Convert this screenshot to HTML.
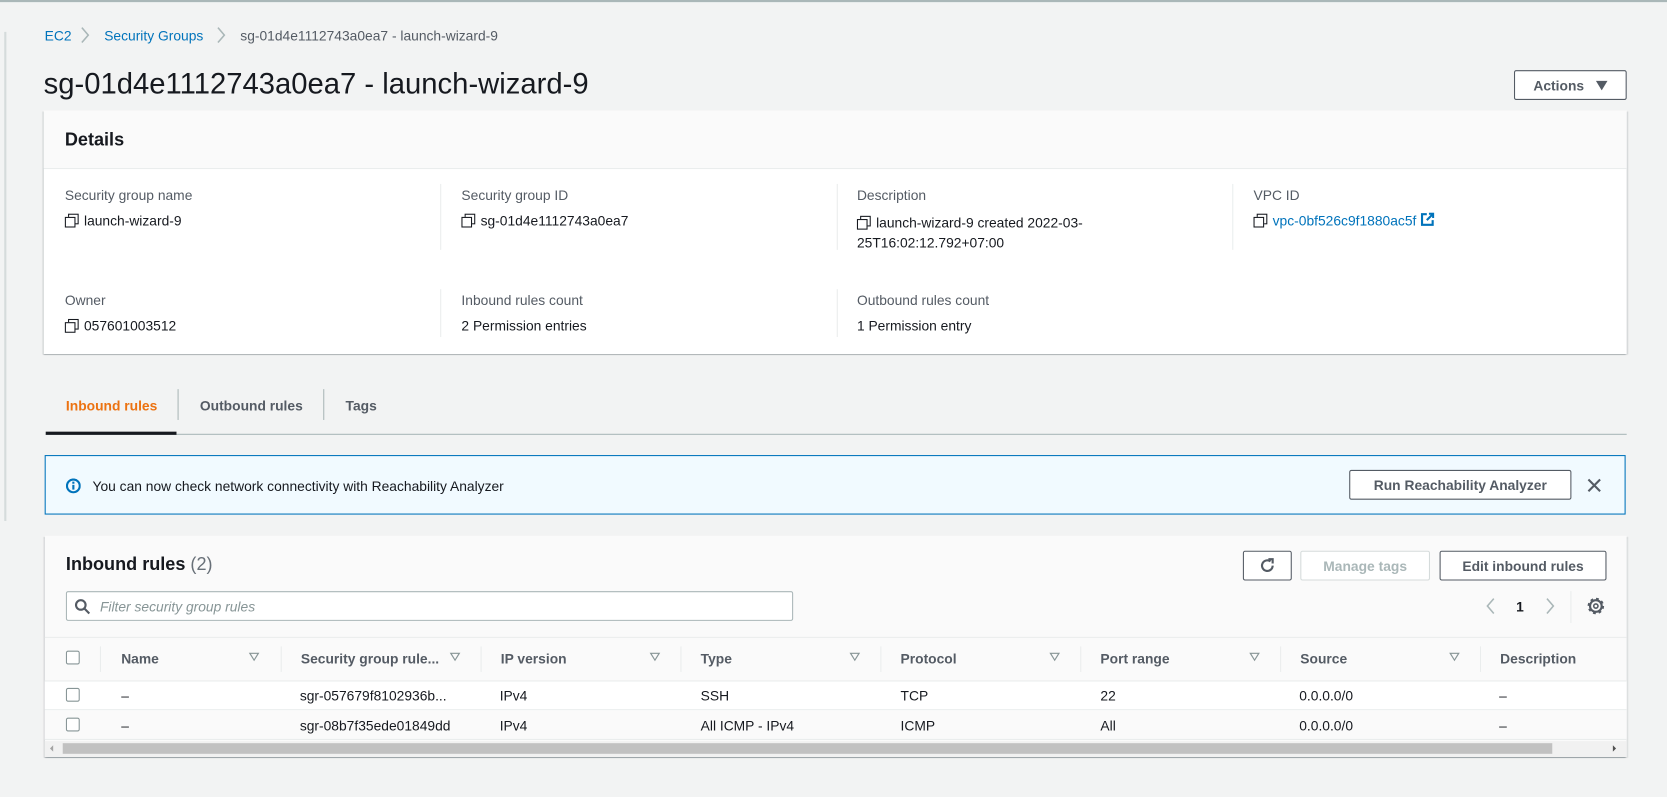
<!DOCTYPE html>
<html><head><meta charset="utf-8"><style>
*{box-sizing:border-box;margin:0;padding:0}
html,body{width:1667px;height:797px;overflow:hidden;background:#f2f3f3}
#w{position:absolute;left:0;top:0;width:1568px;height:750px;transform:scale(1.0632);transform-origin:0 0;font-family:"Liberation Sans",sans-serif;font-size:13px;color:#16191f}
.a{position:absolute;white-space:nowrap}
.l{color:#0073bb}
.g{color:#545b64}
.btn{position:absolute;border:1px solid #545b64;border-radius:2px;background:#fff;font-weight:bold;color:#545b64;font-size:13px;display:flex;align-items:center;justify-content:center}
.sep{position:absolute;width:1px;background:#eaeded}
.cp{display:inline-block;width:12px;height:12px;position:relative;vertical-align:-1px;margin-right:6px}
.cp:before{content:"";position:absolute;left:3px;top:0;width:8px;height:8px;border:1.5px solid #16191f}
.cp:after{content:"";position:absolute;left:0;top:3px;width:8px;height:8px;border:1.5px solid #16191f;background:#fff}
.cb{position:absolute;width:13px;height:13px;border:1px solid #879596;border-radius:2px;background:#fff}
.th{position:absolute;font-weight:bold;color:#545b64;top:612px}
.tri{position:absolute;top:614px;width:0;height:0;border-left:5px solid transparent;border-right:5px solid transparent;border-top:8px solid #879596}
.tri:after{content:"";position:absolute;left:-3px;top:-7px;border-left:3px solid transparent;border-right:3px solid transparent;border-top:5px solid #fafafa}
.td{position:absolute}
</style></head><body><div id="w">
<div class="a" style="left:0;top:0;width:1568px;height:2px;background:#aab7b8"></div>
<div class="a" style="left:4px;top:30px;width:2px;height:460px;background:#d5dbdb"></div>

<div class="a l" style="left:42px;top:26px">EC2</div>
<svg class="a" style="left:75px;top:25px" width="10" height="16"><path d="M2 1l6 7-6 7" fill="none" stroke="#aab7b8" stroke-width="1.5"/></svg>
<div class="a l" style="left:98px;top:26px">Security Groups</div>
<svg class="a" style="left:203px;top:25px" width="10" height="16"><path d="M2 1l6 7-6 7" fill="none" stroke="#aab7b8" stroke-width="1.5"/></svg>
<div class="a g" style="left:226px;top:26px">sg-01d4e1112743a0ea7 - launch-wizard-9</div>

<div class="a" style="left:41px;top:63px;font-size:27.5px">sg-01d4e1112743a0ea7 - launch-wizard-9</div>
<div class="btn" style="left:1424px;top:66px;width:106px;height:28px">Actions&nbsp;&nbsp;&nbsp;<svg width="11" height="9"><path d="M0 0h11L5.5 9z" fill="#545b64"/></svg></div>

<div class="a" style="left:41px;top:104px;width:1489px;height:229px;background:#fff;box-shadow:0 1px 1px rgba(0,28,36,.3),1px 1px 1px rgba(0,28,36,.15),-1px 1px 1px rgba(0,28,36,.15)">
 <div style="height:55px;background:#fafafa;border-bottom:1px solid #eaeded;padding:18px 20px;font-size:17px;font-weight:bold">Details</div>
</div>
<div class="sep" style="left:414px;top:173px;height:62px"></div>
<div class="sep" style="left:787px;top:173px;height:62px"></div>
<div class="sep" style="left:1159px;top:173px;height:62px"></div>
<div class="sep" style="left:414px;top:272px;height:45px"></div>
<div class="sep" style="left:787px;top:272px;height:45px"></div>
<div class="a g" style="left:61px;top:176px">Security group name</div>
<div class="a" style="left:61px;top:200px"><span class="cp"></span>launch-wizard-9</div>
<div class="a g" style="left:434px;top:176px">Security group ID</div>
<div class="a" style="left:434px;top:200px"><span class="cp"></span>sg-01d4e1112743a0ea7</div>
<div class="a g" style="left:806px;top:176px">Description</div>
<div class="a" style="left:806px;top:200px;line-height:19px"><span class="cp"></span>launch-wizard-9 created 2022-03-<br>25T16:02:12.792+07:00</div>
<div class="a g" style="left:1179px;top:176px">VPC ID</div>
<div class="a l" style="left:1179px;top:200px"><span class="cp"></span>vpc-0bf526c9f1880ac5f <svg width="13" height="13" viewBox="0 0 13 13" style="vertical-align:-1px"><path d="M6 1.5H1.5v10h10V7" fill="none" stroke="#0073bb" stroke-width="2"/><path d="M8 1h4v4M12 1L6 7" fill="none" stroke="#0073bb" stroke-width="2"/></svg></div>
<div class="a g" style="left:61px;top:275px">Owner</div>
<div class="a" style="left:61px;top:299px"><span class="cp"></span>057601003512</div>
<div class="a g" style="left:434px;top:275px">Inbound rules count</div>
<div class="a" style="left:434px;top:299px">2 Permission entries</div>
<div class="a g" style="left:806px;top:275px">Outbound rules count</div>
<div class="a" style="left:806px;top:299px">1 Permission entry</div>

<div class="a" style="left:43px;top:408px;width:1487px;height:1px;background:#aab7b8"></div>
<div class="a" style="left:43px;top:406px;width:123px;height:3px;background:#16191f"></div>
<div class="a" style="left:167px;top:366px;width:1px;height:29px;background:#aab7b8"></div>
<div class="a" style="left:304px;top:366px;width:1px;height:29px;background:#aab7b8"></div>
<div class="a" style="left:62px;top:374px;font-weight:bold;color:#ec7211">Inbound rules</div>
<div class="a g" style="left:188px;top:374px;font-weight:bold">Outbound rules</div>
<div class="a g" style="left:325px;top:374px;font-weight:bold">Tags</div>

<div class="a" style="left:42px;top:428px;width:1487px;height:56px;background:#f1faff;border:1px solid #0073bb"></div>
<svg class="a" style="left:62px;top:450px" width="14" height="14" viewBox="0 0 14 14"><circle cx="7" cy="7" r="6" fill="none" stroke="#0073bb" stroke-width="2"/><rect x="6" y="6" width="2" height="4.5" fill="#0073bb"/><rect x="6" y="3" width="2" height="2" fill="#0073bb"/></svg>
<div class="a" style="left:87px;top:450px">You can now check network connectivity with Reachability Analyzer</div>
<div class="btn" style="left:1269px;top:442px;width:209px;height:28px;color:#545b64">Run Reachability Analyzer</div>
<svg class="a" style="left:1493px;top:450px" width="13" height="13"><path d="M1 1L12 12M12 1L1 12" stroke="#545b64" stroke-width="2"/></svg>

<div class="a" style="left:42px;top:504px;width:1488px;height:208px;background:#fafafa;box-shadow:0 1px 1px rgba(0,28,36,.3),1px 1px 1px rgba(0,28,36,.15),-1px 1px 1px rgba(0,28,36,.15)"></div>
<div class="a" style="left:62px;top:521px;font-size:17px;font-weight:bold">Inbound rules <span style="font-weight:normal;color:#687078">(2)</span></div>
<div class="btn" style="left:1169px;top:518px;width:46px;height:28px"><svg width="16" height="16" viewBox="0 0 16 16"><path d="M13 8a5 5 0 1 1-2-4" fill="none" stroke="#545b64" stroke-width="2"/><path d="M9 2h4v4" fill="none" stroke="#545b64" stroke-width="2"/></svg></div>
<div class="btn" style="left:1223px;top:518px;width:122px;height:28px;border-color:#d5dbdb;color:#aab7b8">Manage tags</div>
<div class="btn" style="left:1354px;top:518px;width:157px;height:28px">Edit inbound rules</div>
<div class="a" style="left:62px;top:556px;width:684px;height:28px;background:#fff;border:1px solid #aab7b8;border-radius:2px"></div>
<svg class="a" style="left:70px;top:563px" width="15" height="15"><circle cx="6" cy="6" r="4.5" fill="none" stroke="#545b64" stroke-width="2"/><path d="M9.5 9.5L14 14" stroke="#545b64" stroke-width="2"/></svg>
<div class="a" style="left:94px;top:563px;font-style:italic;color:#879596">Filter security group rules</div>
<svg class="a" style="left:1396px;top:562px" width="12" height="16"><path d="M9 1L3 8l6 7" fill="none" stroke="#aab7b8" stroke-width="1.5"/></svg>
<div class="a" style="left:1426px;top:563px;font-weight:bold">1</div>
<svg class="a" style="left:1452px;top:562px" width="12" height="16"><path d="M3 1l6 7-6 7" fill="none" stroke="#aab7b8" stroke-width="1.5"/></svg>
<div class="a" style="left:1477px;top:556px;width:1px;height:30px;background:#eaeded"></div>
<svg class="a" style="left:1492px;top:561px" width="18" height="18" viewBox="0 0 18 18"><circle cx="9" cy="9" r="5.5" fill="none" stroke="#545b64" stroke-width="2"/><circle cx="9" cy="9" r="6.5" fill="none" stroke="#545b64" stroke-width="2.5" stroke-dasharray="2.5 2.6"/><circle cx="9" cy="9" r="2" fill="none" stroke="#545b64" stroke-width="1.5"/></svg>

<div class="a" style="left:42px;top:599px;width:1488px;height:1px;background:#eaeded"></div>
<div class="a" style="left:42px;top:640px;width:1488px;height:28px;background:#fff;border-top:1px solid #eaeded;border-bottom:1px solid #eaeded"></div>
<div class="a" style="left:42px;top:668px;width:1488px;height:28px;background:#fafafa;border-bottom:1px solid #eaeded"></div>
<div class="sep" style="left:94px;top:608px;height:24px"></div>
<div class="sep" style="left:264px;top:608px;height:24px"></div>
<div class="sep" style="left:452px;top:608px;height:24px"></div>
<div class="sep" style="left:640px;top:608px;height:24px"></div>
<div class="sep" style="left:828px;top:608px;height:24px"></div>
<div class="sep" style="left:1016px;top:608px;height:24px"></div>
<div class="sep" style="left:1204px;top:608px;height:24px"></div>
<div class="sep" style="left:1392px;top:608px;height:24px"></div>
<div class="cb" style="left:62px;top:612px"></div>
<div class="cb" style="left:62px;top:647px"></div>
<div class="cb" style="left:62px;top:675px"></div>
<div class="th" style="left:114px">Name</div><div class="tri" style="left:234px"></div>
<div class="th" style="left:283px">Security group rule...</div><div class="tri" style="left:423px"></div>
<div class="th" style="left:471px">IP version</div><div class="tri" style="left:611px"></div>
<div class="th" style="left:659px">Type</div><div class="tri" style="left:799px"></div>
<div class="th" style="left:847px">Protocol</div><div class="tri" style="left:987px"></div>
<div class="th" style="left:1035px">Port range</div><div class="tri" style="left:1175px"></div>
<div class="th" style="left:1223px">Source</div><div class="tri" style="left:1363px"></div>
<div class="th" style="left:1411px">Description</div>
<div class="td" style="left:114px;top:647px">–</div><div class="td" style="left:282px;top:647px">sgr-057679f8102936b...</div><div class="td" style="left:470px;top:647px">IPv4</div><div class="td" style="left:659px;top:647px">SSH</div><div class="td" style="left:847px;top:647px">TCP</div><div class="td" style="left:1035px;top:647px">22</div><div class="td" style="left:1222px;top:647px">0.0.0.0/0</div><div class="td" style="left:1410px;top:647px">–</div>
<div class="td" style="left:114px;top:675px">–</div><div class="td" style="left:282px;top:675px">sgr-08b7f35ede01849dd</div><div class="td" style="left:470px;top:675px">IPv4</div><div class="td" style="left:659px;top:675px">All ICMP - IPv4</div><div class="td" style="left:847px;top:675px">ICMP</div><div class="td" style="left:1035px;top:675px">All</div><div class="td" style="left:1222px;top:675px">0.0.0.0/0</div><div class="td" style="left:1410px;top:675px">–</div>
<div class="a" style="left:42px;top:697px;width:1488px;height:15px;background:#f1f1f1"></div>
<div class="a" style="left:59px;top:699px;width:1401px;height:10px;background:#c1c1c1"></div>
<div class="a" style="left:47px;top:701px;border-top:3px solid transparent;border-bottom:3px solid transparent;border-right:3px solid #a3a3a3"></div>
<div class="a" style="left:1517px;top:701px;border-top:3px solid transparent;border-bottom:3px solid transparent;border-left:3px solid #505050"></div>
</div></body></html>
